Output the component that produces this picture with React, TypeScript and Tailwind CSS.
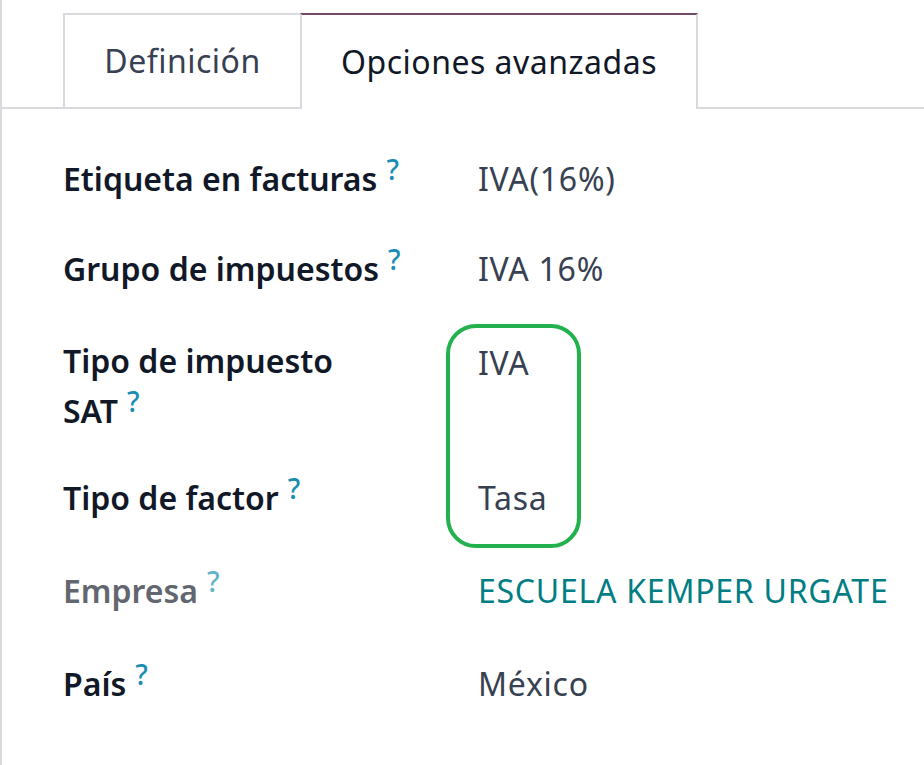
import React from "react";

const font = { fontFamily: '"Noto Sans", "Open Sans", sans-serif' };

function Q({ muted }: { muted?: boolean }) {
  return (
    <span
      className={
        "ml-[9px] inline-block align-top text-[28px] leading-[30px] font-medium " +
        (muted ? "text-[#63b3cb]" : "text-[#1a8db3]")
      }
    >
      ?
    </span>
  );
}

export default function App() {
  return (
    <div
      className="relative w-[924px] h-[765px] bg-white border-l-2 border-[#d8dadd] overflow-hidden"
      style={font}
    >
      {/* tabs */}
      <div className="flex pt-[13px] pl-[61px] border-b-2 border-[#d8dadd]">
        <div className="w-[239px] h-[94px] -mb-[2px] border-2 border-b-0 border-[#d8dadd] flex items-center justify-center text-[32px] tracking-[0.5px] text-[#374151] bg-white">
          Definición
        </div>
        <div className="w-[398px] h-[96px] -mb-[2px] border-x-2 border-[#d8dadd] border-t-2 border-t-[#714b67] flex items-center justify-center text-[32px] tracking-[0.5px] text-[#111827] bg-white -ml-[2px]">
          Opciones avanzadas
        </div>
      </div>

      {/* rows */}
      <div className="pl-[61px] pt-[45px] text-[32px] leading-[50px]">
        <Row label={<>Etiqueta en facturas<Q /></>} value="IVA(16%)" />
        <Row className="mt-[40px]" label={<>Grupo de impuestos<Q /></>} value="IVA 16%" />
        <Row
          className="mt-[42px]"
          label={
            <>
              Tipo de impuesto
              <br />
              SAT<Q />
            </>
          }
          value={<span className="relative top-[2px]">IVA</span>}
        />
        <Row className="mt-[37px]" label={<>Tipo de factor<Q /></>} value="Tasa" />
        <Row
          className="mt-[43px]"
          muted
          label={<>Empresa<Q muted /></>}
          value={<span className="text-[#017e84]">ESCUELA KEMPER URGATE</span>}
        />
        <Row className="mt-[43px]" label={<>País<Q /></>} value="México" />
      </div>

      {/* green highlight */}
      <div className="absolute left-[444px] top-[324px] w-[135px] h-[224px] border-4 border-[#22b14c] rounded-[30px]" />
    </div>
  );
}

function Row({
  label,
  value,
  className = "",
  muted,
}: {
  label: React.ReactNode;
  value: React.ReactNode;
  className?: string;
  muted?: boolean;
}) {
  return (
    <div className={"grid grid-cols-[415px_1fr] " + className}>
      <div className={"font-semibold " + (muted ? "text-[#62666f]" : "text-[#111827]")}>{label}</div>
      <div className="text-[#374151] whitespace-nowrap tracking-[0.75px]">{value}</div>
    </div>
  );
}
